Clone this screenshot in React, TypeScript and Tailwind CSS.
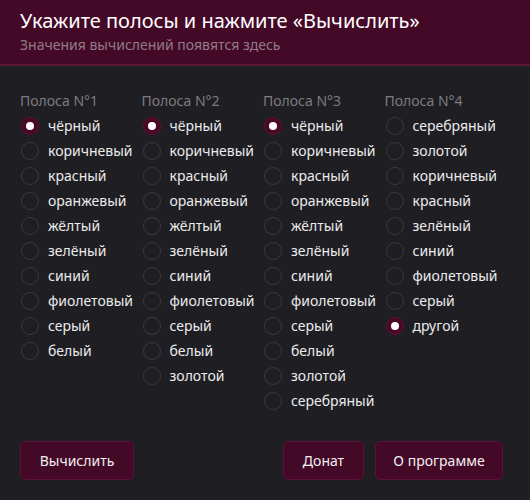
import { useState } from "react";

const columns: { label: string; options: string[]; initial: string }[] = [
  {
    label: "Полоса N°1",
    options: ["чёрный", "коричневый", "красный", "оранжевый", "жёлтый", "зелёный", "синий", "фиолетовый", "серый", "белый"],
    initial: "чёрный",
  },
  {
    label: "Полоса N°2",
    options: ["чёрный", "коричневый", "красный", "оранжевый", "жёлтый", "зелёный", "синий", "фиолетовый", "серый", "белый", "золотой"],
    initial: "чёрный",
  },
  {
    label: "Полоса N°3",
    options: [
      "чёрный",
      "коричневый",
      "красный",
      "оранжевый",
      "жёлтый",
      "зелёный",
      "синий",
      "фиолетовый",
      "серый",
      "белый",
      "золотой",
      "серебряный",
    ],
    initial: "чёрный",
  },
  {
    label: "Полоса N°4",
    options: ["серебряный", "золотой", "коричневый", "красный", "зелёный", "синий", "фиолетовый", "серый", "другой"],
    initial: "другой",
  },
];

function Radio({ checked, label, onClick }: { checked: boolean; label: string; onClick: () => void }) {
  return (
    <button type="button" onClick={onClick} className="flex h-[25px] items-center gap-[9px] pl-px text-left">
      <span
        className={
          checked
            ? "flex h-[18px] w-[18px] shrink-0 items-center justify-center rounded-full border border-[#5e1035] bg-[#4a0827]"
            : "flex h-[18px] w-[18px] shrink-0 items-center justify-center rounded-full border border-[#3a393e]"
        }
      >
        {checked && <span className="h-[8px] w-[8px] rounded-full bg-white" />}
      </span>
      <span className="whitespace-nowrap text-[14px] text-[#ebebeb]">{label}</span>
    </button>
  );
}

function BandColumn({ label, options, initial }: { label: string; options: string[]; initial: string }) {
  const [value, setValue] = useState(initial);
  return (
    <div className="flex flex-col">
      <div className="mb-px mt-[2px] h-[22px] text-[14px] leading-[22px] text-[#7c7b80]">{label}</div>
      {options.map((o) => (
        <Radio key={o} label={o} checked={value === o} onClick={() => setValue(o)} />
      ))}
    </div>
  );
}

const btn =
  "h-[39px] rounded-[5px] border border-[#5a1236] bg-[#450928] text-[14px] text-[#f0f0f0]";

export default function App() {
  return (
    <div
      className="flex h-[500px] flex-col bg-[#1f1e23]"
      style={{ fontFamily: '"Noto Sans", "Open Sans", sans-serif' }}
    >
      <header className="h-[66px] border-b-2 border-[#5c1437] bg-[#450928] px-5 pt-[7px]">
        <h1 className="text-[20px] leading-[28px] text-white">Укажите полосы и нажмите «Вычислить»</h1>
        <p className="text-[14px] leading-[20px] text-[#8f7c86]">Значения вычислений появятся здесь</p>
      </header>

      <main className="grid w-[506px] grid-cols-4 pl-5 pt-[22px]">
        {columns.map((c) => (
          <BandColumn key={c.label} {...c} />
        ))}
      </main>

      <footer className="mt-auto flex items-center pb-[20px] pl-5 pr-[27px]">
        <button className={`${btn} w-[114px]`}>Вычислить</button>
        <div className="ml-auto flex gap-[11px]">
          <button className={`${btn} w-[81px]`}>Донат</button>
          <button className={`${btn} w-[128px]`}>О программе</button>
        </div>
      </footer>
    </div>
  );
}
